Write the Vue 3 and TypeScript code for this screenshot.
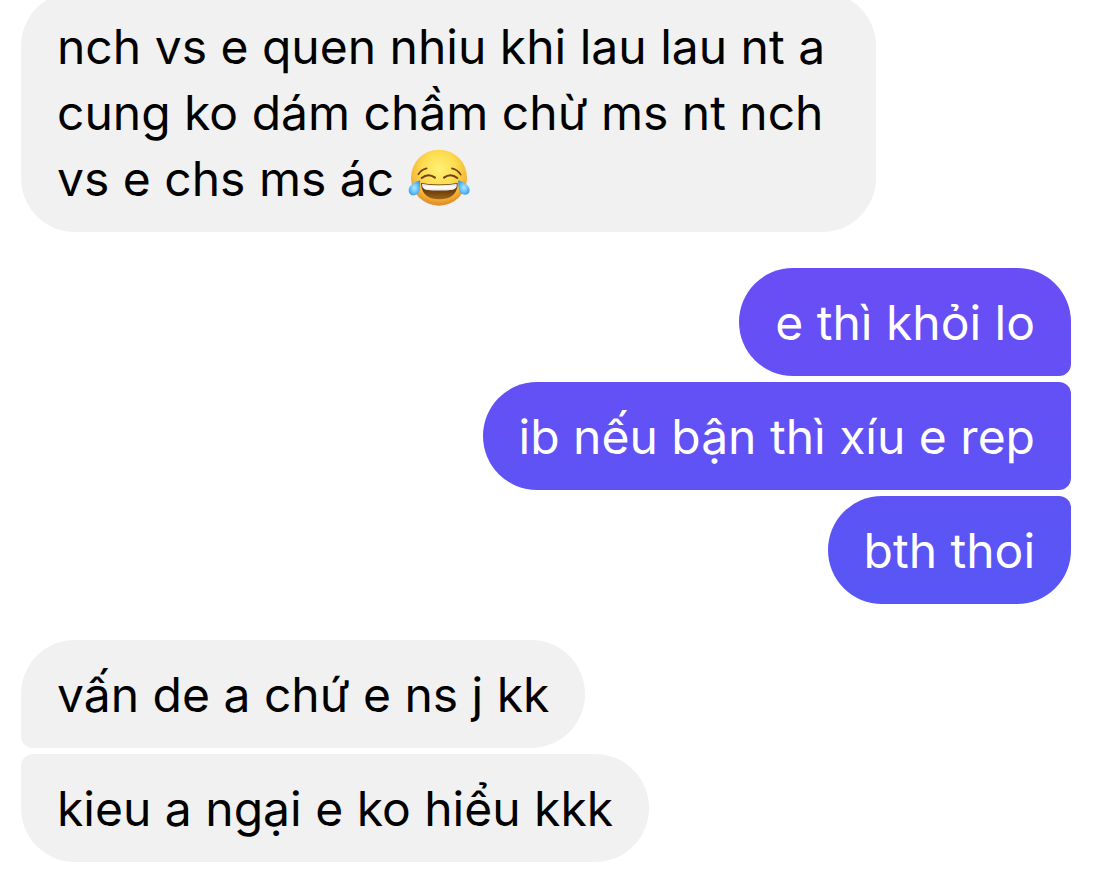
<script setup lang="ts">
type Side = 'in' | 'out'

interface Message {
  id: number
  text: string
  laughing?: boolean
}

interface Group {
  id: number
  side: Side
  messages: Message[]
}

const groups: Group[] = [
  {
    id: 1,
    side: 'in',
    messages: [
      {
        id: 1,
        text: 'nch vs e quen nhiu khi lau lau nt a cung ko dám chầm chừ ms nt nch vs e chs ms ác',
        laughing: true,
      },
    ],
  },
  {
    id: 2,
    side: 'out',
    messages: [
      { id: 2, text: 'e thì khỏi lo' },
      { id: 3, text: 'ib nếu bận thì xíu e rep' },
      { id: 4, text: 'bth thoi' },
    ],
  },
  {
    id: 3,
    side: 'in',
    messages: [
      { id: 5, text: 'vấn de a chứ e ns j kk' },
      { id: 6, text: 'kieu a ngại e ko hiểu kkk' },
    ],
  },
]
</script>

<template>
  <main class="thread">
    <section v-for="group in groups" :key="group.id" class="group" :class="group.side">
      <p v-for="message in group.messages" :key="message.id" class="bubble">
        {{ message.text }}
        <svg v-if="message.laughing" class="emoji" viewBox="39 43 186 171" role="img" aria-label="😂">
          <defs>
            <radialGradient id="face" cx="0.5" cy="0.35" r="0.68">
              <stop offset="0" stop-color="#fff176" />
              <stop offset="0.45" stop-color="#fddc50" />
              <stop offset="0.75" stop-color="#f6b637" />
              <stop offset="1" stop-color="#d97c22" />
            </radialGradient>
            <linearGradient id="mouth" x1="0" y1="0" x2="0" y2="1">
              <stop offset="0" stop-color="#5a2c0a" />
              <stop offset="0.5" stop-color="#6f3f0d" />
              <stop offset="1" stop-color="#9b6517" />
            </linearGradient>
            <linearGradient id="teeth" x1="0" y1="0" x2="0" y2="1">
              <stop offset="0" stop-color="#d9d9d9" />
              <stop offset="0.5" stop-color="#ffffff" />
              <stop offset="1" stop-color="#e9e7e4" />
            </linearGradient>
            <radialGradient id="tear" cx="0.5" cy="0.5" r="0.6">
              <stop offset="0" stop-color="#b4e6ff" />
              <stop offset="0.5" stop-color="#6cc4fa" />
              <stop offset="1" stop-color="#2b98e6" />
            </radialGradient>
          </defs>
          <circle cx="132" cy="129" r="84" fill="url(#face)" />
          <g fill="none" stroke="#70400f" stroke-linecap="round">
            <path d="M70 119 Q78 105 95 101" stroke-width="5" />
            <path d="M171 101 Q188 105 197 120" stroke-width="5" />
            <path d="M80 130 Q100 114 120 129" stroke-width="6" />
            <path d="M147 129 Q167 114 187 130" stroke-width="6" />
          </g>
          <path d="M78 145 Q132 154 188 145 Q188 193 132 194 Q80 193 78 145 Z" fill="url(#mouth)" />
          <path d="M81 147 Q132 156 185 147 Q188 160 174 165 Q132 170 92 165 Q80 160 81 147 Z" fill="url(#teeth)" />
          <path d="M75 137 C59 142 41 152 41 168 C42 186 66 187 73 170 C76 160 75 149 75 137 Z" fill="url(#tear)" />
          <path d="M190 137 C206 142 224 152 224 168 C222 184 199 184 193 168 C190 158 190 149 190 137 Z" fill="url(#tear)" />
        </svg>
      </p>
    </section>
  </main>
</template>

<style>
body {
  margin: 0;
  background: #ffffff;
}
</style>

<style scoped>
.thread {
  box-sizing: border-box;
  height: 100vh;
  overflow: hidden;
  display: flex;
  flex-direction: column;
  justify-content: flex-end;
  gap: 36px;
  padding: 0 24px 11px 21px;
  font-family: Inter, Roboto, 'Liberation Sans', sans-serif;
  font-size: 48px;
  line-height: 66px;
}

.group {
  flex: none;
  display: flex;
  flex-direction: column;
  gap: 6px;
}

.in {
  align-items: flex-start;
}

.out {
  align-items: flex-end;
}

.bubble {
  box-sizing: border-box;
  max-width: calc(100% - 195px);
  margin: 0;
  padding: 22px 36px 20px;
  border-radius: 54px;
}

.in .bubble {
  background: #f1f1f1;
  color: #000000;
}

.out .bubble {
  background: linear-gradient(180deg, #6a4df5 31%, #5856f5 69%) fixed;
  color: #ffffff;
}

.in .bubble:not(:last-child) {
  border-bottom-left-radius: 12px;
}

.in .bubble:not(:first-child) {
  border-top-left-radius: 12px;
}

.out .bubble:not(:last-child) {
  border-bottom-right-radius: 12px;
}

.out .bubble:not(:first-child) {
  border-top-right-radius: 12px;
}

.emoji {
  width: 62px;
  height: 57px;
  vertical-align: -10px;
}
</style>
